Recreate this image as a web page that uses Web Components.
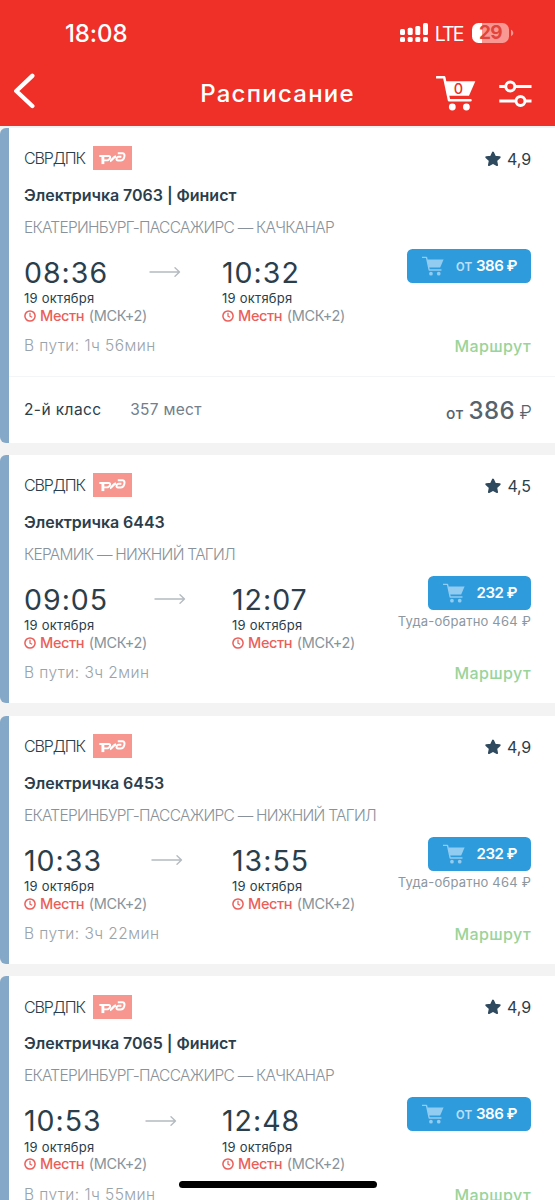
<!DOCTYPE html>
<html lang="ru">
<head>
<meta charset="utf-8">
<title>Расписание</title>
<style>
html,body{margin:0;height:1200px;overflow:hidden;background:#f3f3f3;font-family:Inter,"Noto Sans",sans-serif;color:#2b3e4b}
</style>
</head>
<body>
<schedule-app></schedule-app>
<script>
const define = (name, render) => customElements.define(name, class extends HTMLElement {
  connectedCallback() {
    if (this.shadowRoot) return;
    this.attachShadow({mode: 'open'}).innerHTML = render(this);
  }
});

define('cart-icon', () => `<style>:host{display:block;white-space:normal}svg{display:block;width:100%;height:100%}</style>
<svg viewBox="0 0 40 36" fill="none" stroke="currentColor" stroke-width="2.5">
<path d="M.8 2.3h7.4L13 25.2h21.5" stroke-linejoin="round" stroke-linecap="round"/>
<path d="M9.3 6.3h30L33 20.8H12.4z" fill="currentColor" stroke="none"/>
<circle cx="16.3" cy="32" r="3.4" fill="currentColor" stroke="none"/><circle cx="30.4" cy="32" r="3.4" fill="currentColor" stroke="none"/></svg>`);

define('status-bar', () => `<style>
:host{display:flex;height:62px;box-sizing:border-box;padding:4px 41px 0 65px;align-items:center;justify-content:space-between;color:#fff}
.time{font-size:24px;font-weight:500;letter-spacing:-.1px}
.right{display:flex;align-items:center}
.lte{font-size:19.5px;letter-spacing:-1.9px;margin:1px 9.5px 0 6px}
.bat{width:37px;height:20px;border-radius:6.5px;background:linear-gradient(90deg,#fff 10.5px,#f99893 10.5px);color:#e2443d;font-size:19px;font-weight:700;line-height:20px;text-align:center;letter-spacing:-.6px}
svg{display:block}
</style>
<span class="time">18:08</span>
<div class="right">
<svg width="30" height="20" viewBox="0 0 30 20" fill="#fff"><rect x="1" y="6" width="5" height="6" rx="1.5"/><rect x="8.7" y="4.7" width="5" height="7.3" rx="1.5"/><rect x="16.3" y="3" width="5" height="9" rx="1.5"/><rect x="24" y="0" width="5" height="12" rx="1.5"/><rect x="1" y="14" width="5" height="5" rx="1.5"/><rect x="8.7" y="14" width="5" height="5" rx="1.5"/><rect x="16.3" y="14" width="5" height="5" rx="1.5"/><rect x="24" y="14" width="5" height="5" rx="1.5"/></svg>
<span class="lte">LTE</span><div class="bat">29</div>
<svg width="5" height="8" viewBox="0 0 5 8"><path d="M2 .8c3 1.4 3 5 0 6.4z" fill="#f99893"/></svg></div>`);

define('nav-bar', () => `<style>
:host{display:grid;grid-template-columns:1fr auto 1fr;height:63.5px;align-items:center;color:#fff;padding:0 23px 0 13px}
h1{margin:0;font-size:24px;font-weight:500;letter-spacing:1.25px;line-height:30px;margin-left:10px}
.tools{display:flex;justify-content:flex-end;align-items:center;gap:23px}
.cart{display:grid;width:40px;height:36px;margin-top:-1px}
.cart>*{grid-area:1/1}
.cart span{color:#ee3028;font-size:14.5px;font-weight:500;line-height:18px;text-align:center;padding:5px 0 0 5px}
svg{display:block}
.back{margin-top:-5px}
</style>
<svg class="back" width="22" height="36" viewBox="0 0 22 36" fill="none" stroke="#fff" stroke-width="4.4" stroke-linecap="round" stroke-linejoin="round"><path d="M19.3 2.8 3.3 18 19.3 33"/></svg>
<h1><slot></slot></h1>
<div class="tools"><div class="cart"><cart-icon></cart-icon><span>0</span></div>
<svg width="33" height="30" viewBox="0 0 33 30" fill="none" stroke="#fff" stroke-width="2.9"><path d="M.3 7.5h6.8M15.9 7.5h16.6M.3 22h16.8M25.8 22h6.7"/><circle cx="11.3" cy="7.500" r="4.5"/><circle cx="21.5" cy="22" r="4.5"/></svg></div>`);

define('rzd-logo', () => `<style>:host{display:block;width:39px;height:24px;background:#f6968f}svg{display:block}</style>
<svg width="39" height="24" viewBox="0 0 39 24" fill="none" stroke="#fff"><path d="M6.300 10h9.200c1.700 0 2 1 1.500 2.200-.6 1.600-1.700 2.200-3.200 2.200H9.800" stroke-width="1.900"/><path d="M9.900 9.500v8.600" stroke-width="2.900"/><path d="M17 15c1.900 0 3.300-4.500 6-4.500" stroke-width="2.300"/><path d="M28.400 10.700h-2.700c-2.300 0-3.200 3.900-.6 3.900h2.600c3.600 0 5.400-7.300 2-7.300h-4.900" stroke-width="2"/></svg>`);

define('stop-time', () => `<style>
:host{display:block}
.date{font-size:13px;letter-spacing:.25px;line-height:17px;height:16.5px;margin-top:-.5px}
.zone{display:flex;align-items:center;height:18px;font-size:14.5px;line-height:18px;white-space:pre;letter-spacing:-.3px;color:#87939b}
b{font-weight:500;color:#ea5f5a;margin:0 4.5px 0 4px;letter-spacing:-.35px}
svg{display:block}
</style>
<slot></slot><div class="date">19 октября</div>
<div class="zone"><svg width="12" height="12" viewBox="0 0 12 12" fill="none" stroke="#ea5f5a" stroke-width="1.5"><circle cx="6" cy="6" r="5.1"/><path d="M6 2.8v3.4l2.2 1.1" stroke-width="1.2"/></svg><b>Местн</b><span>(МСК+2)</span></div>`);

define('buy-button', el => `<style>
:host{display:flex;box-sizing:border-box;height:34px;align-items:center;border-radius:5.5px;background:#2d9bdc;padding:0 14px 0 15px;color:#fff;font-size:15px;font-weight:600;line-height:20px;letter-spacing:-.5px;white-space:pre}
cart-icon{width:22px;height:20px;color:#92ccf1;margin-right:12px}
i{font-style:normal;font-weight:500;color:#b9def6;letter-spacing:0;margin-right:4px}
</style><cart-icon></cart-icon>${el.hasAttribute('from') ? '<i>от</i>' : ''}<slot></slot>`);

define('train-card', el => {
  const a = n => el.getAttribute(n);
  return `<style>
:host{display:block;box-sizing:border-box;border-left:9px solid #84a8c7;border-radius:6px 0 0 6px;background:#fff;overflow:hidden;flex:none}
.body{height:248.4px;box-sizing:border-box;padding:18.5px 24px 0 15px}
.row{display:flex;align-items:center;justify-content:space-between}
.company{height:24px;font-size:16px}
.company>div{display:flex;align-items:center}
.name{font-weight:300;letter-spacing:-1.1px;width:69.3px}
.rate{letter-spacing:-.1px;gap:6px;padding-top:1px}
h2{margin:14.5px 0 0;font-size:16px;font-weight:600;line-height:20px;letter-spacing:-.04px}
.route{font-size:15.5px;font-weight:300;letter-spacing:-.72px;line-height:20px;margin-top:13px;color:#88929a;white-space:nowrap}
.trip{display:flex;margin-top:16px;height:86px}
.dep{width:${a('offset')}px}
.times{height:37px;display:flex;align-items:center;font-size:28.5px;letter-spacing:1px;line-height:37px}
.times span{flex:none}
.arrow{flex:1;display:flex;justify-content:center;padding-right:1px}
.buy{margin-left:auto;display:flex;flex-direction:column;align-items:flex-end;margin-top:-5px}
.both{font-size:13px;letter-spacing:.2px;line-height:18px;margin-top:2px;color:#8c979f}
.path{font-size:15.5px;font-weight:300;letter-spacing:.44px;line-height:20px;color:#9aa3a9;margin-top:-3.5px}
.path a{font-size:16px;font-weight:500;letter-spacing:.4px;color:#99d49b}
.foot{height:66.8px;box-sizing:border-box;border-top:1.5px solid #f3f5f6;display:flex;align-items:center;padding:0 23px 0 15px;font-size:15.5px;letter-spacing:.42px}
.seats{margin-left:28.5px;color:#71808b;font-weight:400;letter-spacing:.3px}
.sum{margin-left:auto;display:flex;align-items:baseline;color:#56636d;font-weight:500;padding-top:1px}
.sum b{font-size:24px;font-weight:500;margin:0 4.5px 0 5px}
.sum i{font-style:normal;font-size:18.5px;font-weight:300;letter-spacing:0}
svg{display:block}
</style>
<div class="body">
<div class="row company"><div><span class="name">СВРДПК</span><rzd-logo></rzd-logo></div>
<div class="rate"><svg width="16" height="16" viewBox="0 0 16 16" fill="#2f4a5e" stroke="#2f4a5e" stroke-width="1.9" stroke-linejoin="round"><path d="m8 1.5 2 4.1 4.7.6-3.5 3.3.9 4.6L8 11.9l-4.1 2.2.9-4.6L1.3 6.2 6 5.6z"/></svg><span>${a('rating')}</span></div></div>
<h2>${a('train')}</h2>
<div class="route">${a('route')}</div>
<div class="trip">
<stop-time class="dep"><div class="times"><span>${a('dep')}</span><div class="arrow"><svg width="32" height="12" viewBox="0 0 32 12" fill="none" stroke="#b4bbc0" stroke-width="1.4" stroke-linecap="round" stroke-linejoin="round"><path d="M1 6h29.5M26 1.8 30.5 6 26 10.2"/></svg></div></div></stop-time>
<stop-time><div class="times"><span>${a('arr')}</span></div></stop-time>
<div class="buy"><buy-button ${a('both') ? '' : 'from'}>${a('price')} ₽</buy-button>${a('both') ? `<div class="both">Туда-обратно ${a('both')} ₽</div>` : ''}</div>
</div>
<div class="row path"><span>В пути: ${a('travel')}</span><a>Маршрут</a></div>
</div>
${a('seats') ? `<div class="foot"><span>2-й класс</span><span class="seats">${a('seats')} мест</span><span class="sum"><span>от</span><b>${a('price')}</b><i>₽</i></span></div>` : ''}`;
});

define('schedule-app', () => `<style>
:host{display:flex;flex-direction:column;height:1200px;position:relative;overflow:hidden}
header{background:#ee3028;flex:none}
main{display:flex;flex-direction:column;gap:12.2px;padding-top:2.1px}
.home{position:absolute;left:178.5px;top:1180.5px;width:198px;height:7.5px;border-radius:4px;background:#000}
</style>
<header><status-bar></status-bar><nav-bar>Расписание</nav-bar></header>
<main>
<train-card train="Электричка 7063 | Финист" route="ЕКАТЕРИНБУРГ-ПАССАЖИРС — КАЧКАНАР" dep="08:36" arr="10:32" offset="198" price="386" rating="4,9" travel="1ч 56мин" seats="357"></train-card>
<train-card train="Электричка 6443" route="КЕРАМИК — НИЖНИЙ ТАГИЛ" dep="09:05" arr="12:07" offset="208" price="232" both="464" rating="4,5" travel="3ч 2мин"></train-card>
<train-card train="Электричка 6453" route="ЕКАТЕРИНБУРГ-ПАССАЖИРС — НИЖНИЙ ТАГИЛ" dep="10:33" arr="13:55" offset="208" price="232" both="464" rating="4,9" travel="3ч 22мин"></train-card>
<train-card train="Электричка 7065 | Финист" route="ЕКАТЕРИНБУРГ-ПАССАЖИРС — КАЧКАНАР" dep="10:53" arr="12:48" offset="198" price="386" rating="4,9" travel="1ч 55мин"></train-card>
</main>
<div class="home"></div>`);
</script>
</body>
</html>
